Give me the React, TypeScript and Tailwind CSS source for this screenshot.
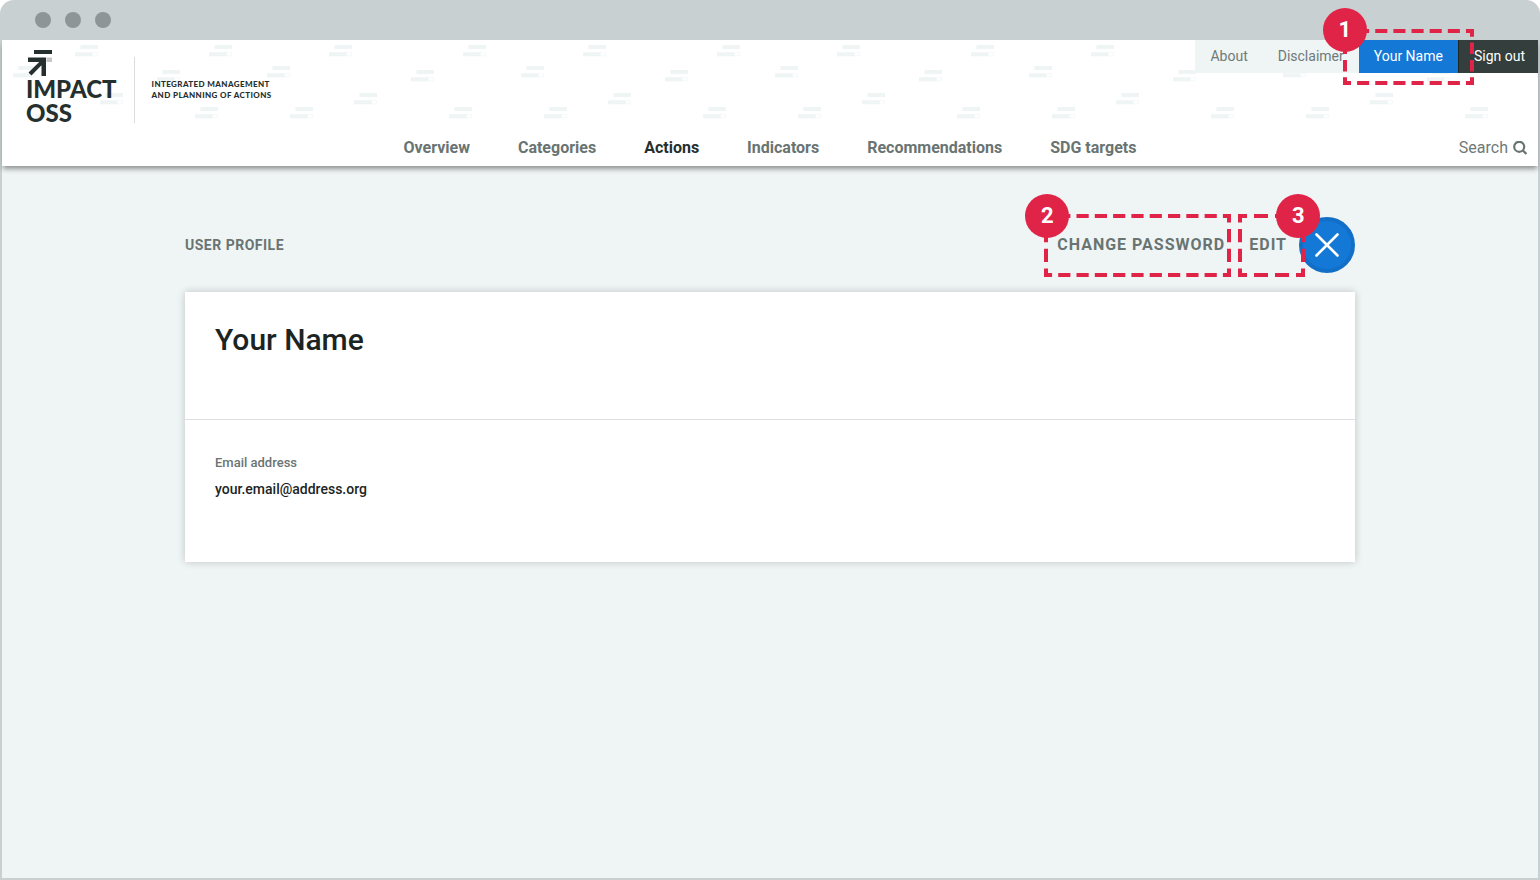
import type { ReactNode } from "react";

const tileMarks: [number, number][] = [
  [11, 26],
  [34, 67],
  [73, 5],
  [98, 53],
  [155, 30],
  [193, 67],
  [207, 5],
];

function HeaderPattern() {
  return (
    <svg className="pointer-events-none absolute inset-0 h-full w-full" aria-hidden="true">
      <defs>
        <pattern id="marks" width="254" height="126" patternUnits="userSpaceOnUse">
          {tileMarks.map(([x, y]) => (
            <g key={`${x}-${y}`} transform={`translate(${x} ${y})`}>
              <rect x="5.5" y="0" width="17.5" height="4" fill="#eff4f4" />
              <rect x="0" y="7.3" width="17.5" height="4" fill="#eff4f4" />
              <rect x="17.5" y="7.7" width="5" height="3.2" fill="#fff" stroke="#f3f6f7" strokeWidth="0.8" />
            </g>
          ))}
        </pattern>
      </defs>
      <rect width="100%" height="100%" fill="url(#marks)" />
    </svg>
  );
}

function DashedFrame({ width, height }: { width: number; height: number }) {
  const w = width - 4;
  const h = height - 4;
  const side = (length: number) => {
    const pitch = length / Math.round(length / 18.5);
    const dash = (pitch * 2) / 3;
    return { strokeDasharray: `${dash} ${pitch - dash}`, strokeDashoffset: dash / 2 };
  };
  return (
    <svg width={width} height={height} viewBox={`0 0 ${width} ${height}`} fill="none" stroke="#e02447" strokeWidth="4" aria-hidden="true">
      <path d={`M2 2h${w}`} {...side(w)} />
      <path d={`M2 ${h + 2}h${w}`} {...side(w)} />
      <path d={`M2 2v${h}`} {...side(h)} />
      <path d={`M${w + 2} 2v${h}`} {...side(h)} />
      <path d={`M0 2h4M0 ${h + 2}h4M${w} 2h4M${w} ${h + 2}h4`} />
    </svg>
  );
}

function Callout({
  label,
  width,
  height,
  place,
  badge,
}: {
  label: string;
  width: number;
  height: number;
  place: string;
  badge: string;
}) {
  return (
    <div className={`pointer-events-none absolute z-20 ${place}`}>
      <DashedFrame width={width} height={height} />
      <span
        className={`absolute flex size-11 items-center justify-center rounded-full bg-[#e02447] text-[22px] leading-none font-bold text-white ${badge}`}
      >
        {label}
      </span>
    </div>
  );
}

function Logo() {
  return (
    <a href="#home" className="flex flex-col pl-6 font-[Lato,sans-serif] text-[#252f2e]">
      <svg width="28" height="26" viewBox="0 0 28 26" aria-hidden="true">
        <path d="M8 0h18v4H8z" fill="currentColor" />
        <path d="M20.500 7.500H26V12h-5.500z" fill="#c4c7c7" />
        <path d="M2 7.500h18V26h-4.500V15.200L5.500 25.400 2.500 22.400 13.200 12H2z" fill="currentColor" />
      </svg>
      <span className="flex flex-col pt-px text-[24px] leading-6 font-black">
        <span>IMPACT</span>
        <span>OSS</span>
      </span>
    </a>
  );
}

const navItems = ["Overview", "Categories", "Actions", "Indicators", "Recommendations", "SDG targets"];

function Header() {
  return (
    <header className="relative z-10 flex h-[126px] flex-col justify-between bg-white shadow-[0_4px_5px_-1px_rgba(0,0,0,0.4)]">
      <HeaderPattern />
      <div className="relative flex items-start justify-between">
        <div className="flex items-start pt-2.5">
          <Logo />
          <p className="mt-[7px] ml-[17px] flex h-[66px] items-center border-l border-[#d9dddd] pl-[17px] font-[Lato,sans-serif] text-[8px] leading-[11px] font-black tracking-wider text-[#252f2e]">
            <span>
              INTEGRATED MANAGEMENT
              <br />
              AND PLANNING OF ACTIONS
            </span>
          </p>
        </div>
        <nav aria-label="Account" className="flex h-[33px] bg-[#eff4f5] text-[14px] leading-[33px] text-[#6e7a78]">
          <a href="#about" className="px-[15px]">About</a>
          <a href="#disclaimer" className="px-[15px]">Disclaimer</a>
          <div className="relative">
            <a href="#profile" className="block bg-[#1478d6] px-[15px] text-white">Your Name</a>
            <Callout label="1" width={131} height={56} place="-top-[11px] -left-4" badge="-top-[21px] -left-5" />
          </div>
          <a href="#signout" className="border-l border-[#1f2827] bg-[#333e3d] pr-[13px] pl-[15px] text-white">Sign out</a>
        </nav>
      </div>
      <div className="absolute inset-x-0 bottom-0 flex h-9 items-center justify-center">
        <nav aria-label="Main" className="flex gap-12 text-[16px] font-bold text-[#697472]">
          {navItems.map((item) => (
            <a key={item} href="#section" className={item === "Actions" ? "text-[#252f2e]" : ""}>
              {item}
            </a>
          ))}
        </nav>
        <a href="#search" className="absolute right-[11px] flex items-center gap-[5px] text-[16px] text-[#6e7a78]">
          Search
          <svg width="14" height="14" viewBox="0 0 14 14" fill="none" stroke="#697472" strokeWidth="2.2" aria-hidden="true">
            <circle cx="6.200" cy="5.800" r="5" />
            <path d="M9.600 9.200l3.800 3.800" />
          </svg>
        </a>
      </div>
    </header>
  );
}

function ActionItem({ children, callout }: { children: ReactNode; callout: ReactNode }) {
  return (
    <div className="relative">
      <button type="button" className="block text-[16px] leading-6 font-bold tracking-[1px]">{children}</button>
      {callout}
    </div>
  );
}

export default function App() {
  return (
    <div className="flex min-h-screen flex-col bg-white font-[Roboto,sans-serif]">
      <div className="flex flex-1 flex-col rounded-t-[14px] bg-[#c8d0d1] px-0.5 pb-0.5">
        <div className="flex h-10 items-center gap-3.5 pl-[33px]">
          <span className="size-4 rounded-full bg-[#8d9596]" />
          <span className="size-4 rounded-full bg-[#8d9596]" />
          <span className="size-4 rounded-full bg-[#8d9596]" />
        </div>
        <Header />
        <main className="flex-1 bg-[#eff4f5] pt-[51px]">
          <div className="mx-auto max-w-[1170px]">
            <div className="flex h-14 items-center justify-between text-[#697472]">
              <h2 className="text-[14px] font-bold tracking-[0.5px]">USER PROFILE</h2>
              <div className="flex items-center">
                <div className="mr-3 flex gap-6">
                  <ActionItem
                    callout={<Callout label="2" width={187} height={63} place="-top-[19px] -left-[13px]" badge="-top-5 -left-[19px]" />}
                  >
                    CHANGE PASSWORD
                  </ActionItem>
                  <ActionItem
                    callout={<Callout label="3" width={67} height={63} place="-top-[19px] -left-[11px]" badge="-top-5 -right-[15px]" />}
                  >
                    EDIT
                  </ActionItem>
                </div>
                <button
                  type="button"
                  aria-label="Close"
                  className="flex size-14 items-center justify-center rounded-full border-4 border-[#126fc8] bg-[#1478d6]"
                >
                  <svg width="24" height="24" viewBox="0 0 24 24" stroke="#fff" strokeWidth="2.6" strokeLinecap="round" aria-hidden="true">
                    <path d="M1.500 1.500l21 21M22.500 1.500l-21 21" />
                  </svg>
                </button>
              </div>
            </div>
            <section className="mt-[19px] bg-white text-[#1c2423] shadow-[0_0_8px_rgba(0,0,0,0.2)]">
              <div className="h-32 border-b border-[#dcdfe0] px-[30px] pt-7">
                <h1 className="text-[30px] leading-10 font-medium">Your Name</h1>
              </div>
              <dl className="h-[142px] px-[30px] pt-8">
                <dt className="text-[13px] leading-[22px] font-medium text-[#697472]">Email address</dt>
                <dd className="pt-1 text-[14px] leading-[22px] font-medium">your.email@address.org</dd>
              </dl>
            </section>
          </div>
        </main>
      </div>
    </div>
  );
}
